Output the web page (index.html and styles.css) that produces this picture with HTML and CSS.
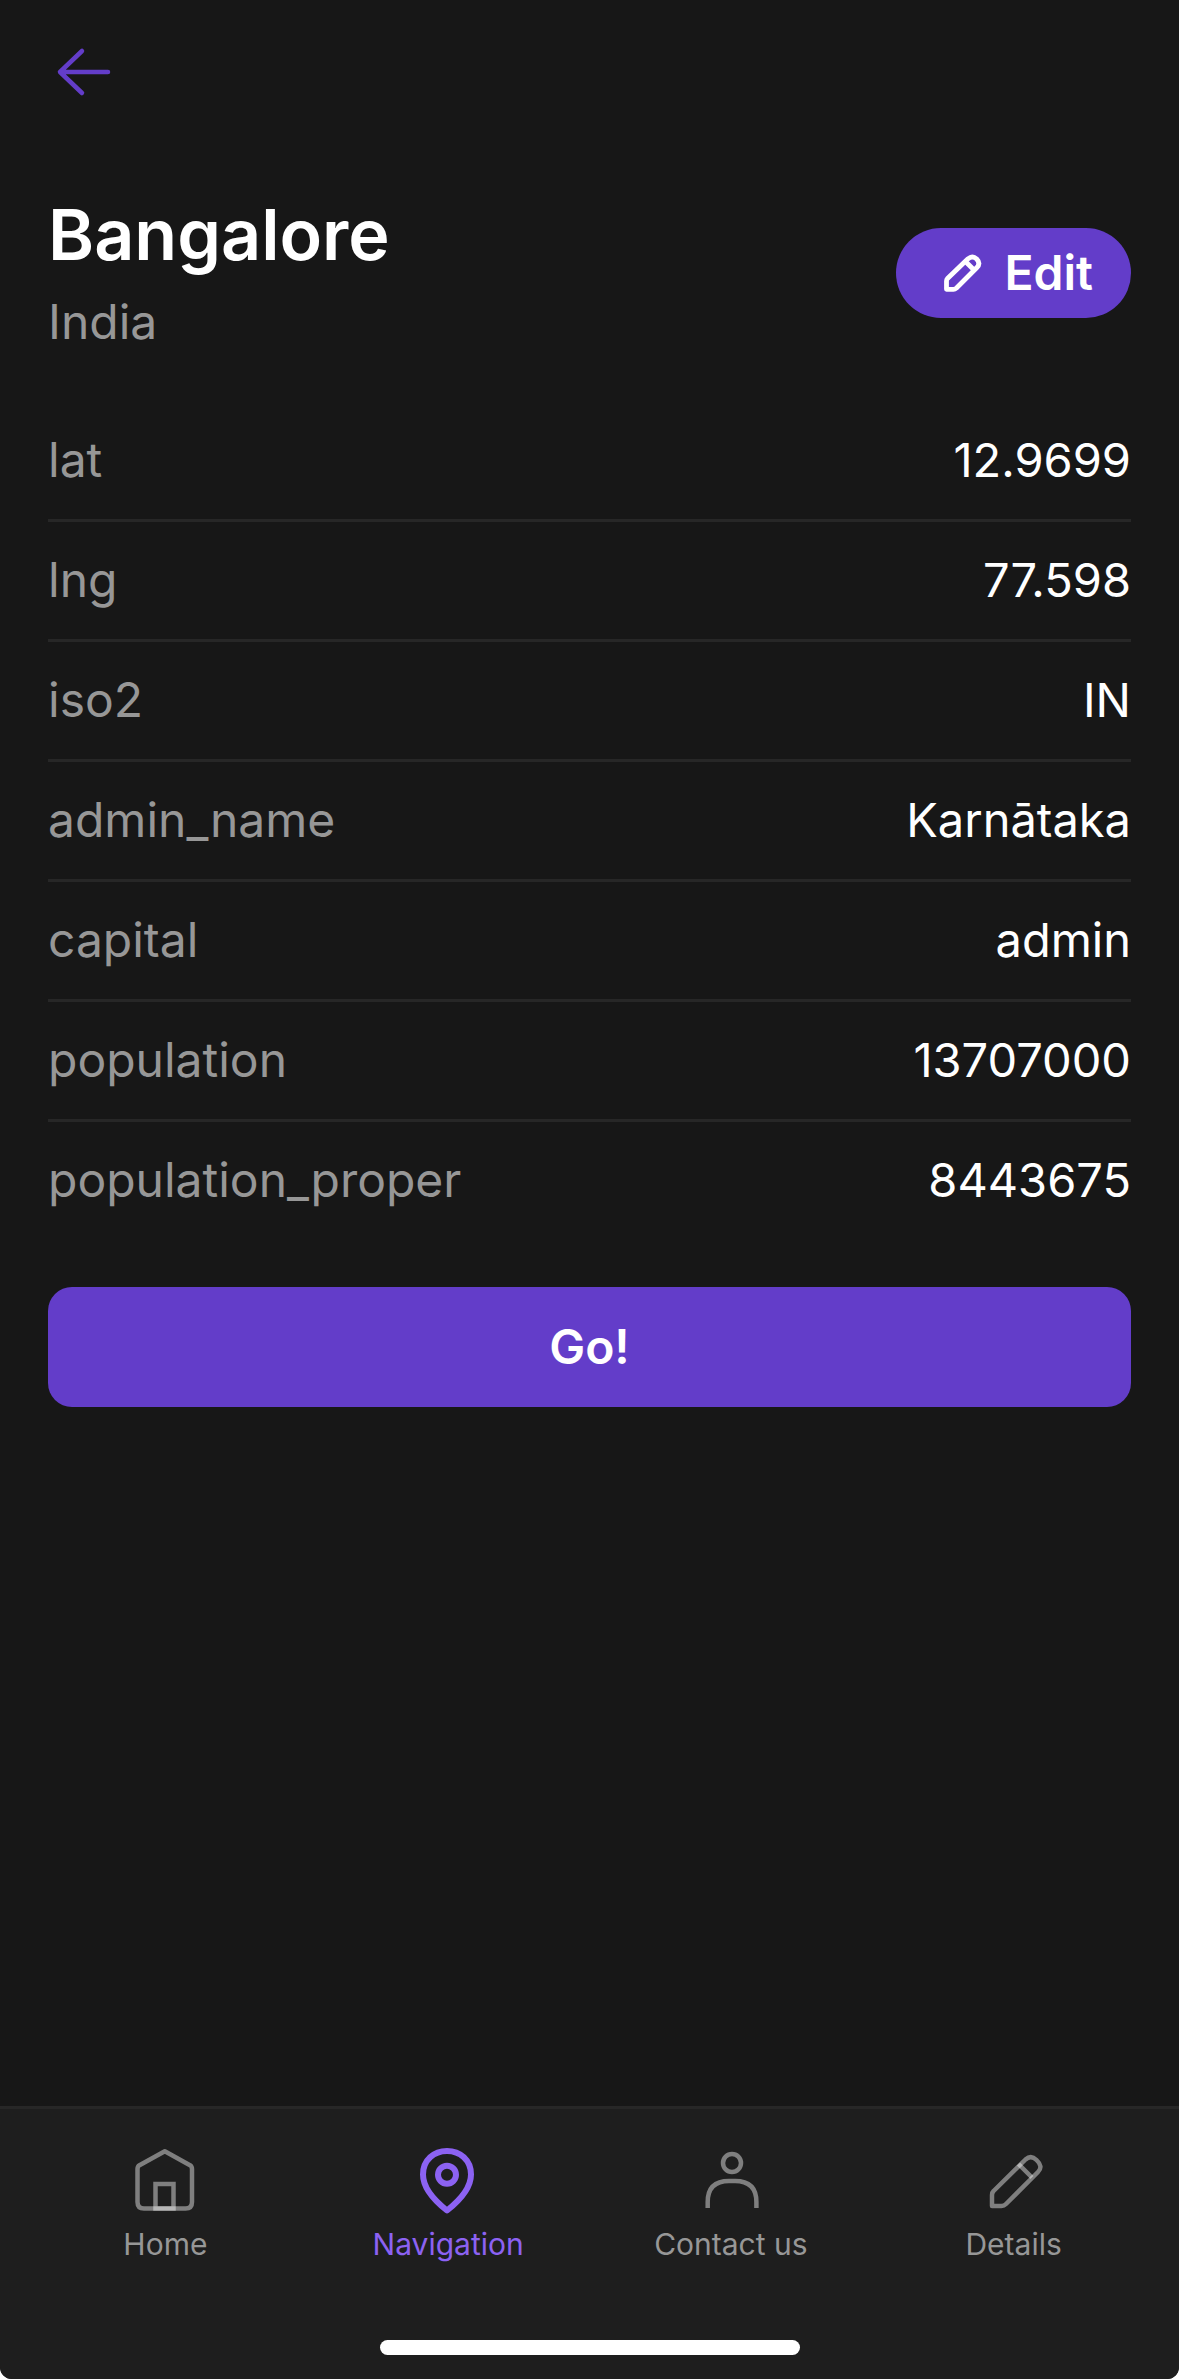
FILE: index.html
```html
<!DOCTYPE html>
<html lang="en">
<head>
<meta charset="utf-8">
<meta name="viewport" content="width=device-width, initial-scale=1">
<title>Bangalore</title>
<link rel="stylesheet" href="styles.css">
</head>
<body>
<div class="screen">
  <header class="topbar">
    <a class="back" href="#" aria-label="Back">
      <svg class="icon" viewBox="0 0 72 72" fill="none" stroke="currentColor" stroke-width="4.5" stroke-linecap="round" stroke-linejoin="round"><path d="M60 36H12M34 15L12 36L34 57"/></svg>
    </a>
  </header>
  <main class="content">
    <div class="heading">
      <div>
        <h1 class="title">Bangalore</h1>
        <p class="subtitle">India</p>
      </div>
      <button class="edit" type="button">
        <svg class="edit-icon" viewBox="0 0 48 48" fill="none" stroke="currentColor" stroke-width="4.8" stroke-linejoin="round"><path d="M8.5 40.3V32Q8.5 30.5 9.5 29.5L30 9.8Q34.5 6 38.7 10Q43 14.5 38.7 18.8L18.5 39Q17 40.3 15.5 40.3ZM27.5 12.5L36 21"/></svg>
        <span>Edit</span>
      </button>
    </div>
    <dl class="facts">
      <div class="fact"><dt>lat</dt><dd>12.9699</dd></div>
      <div class="fact"><dt>lng</dt><dd>77.598</dd></div>
      <div class="fact"><dt>iso2</dt><dd>IN</dd></div>
      <div class="fact"><dt>admin_name</dt><dd>Karnātaka</dd></div>
      <div class="fact"><dt>capital</dt><dd>admin</dd></div>
      <div class="fact"><dt>population</dt><dd>13707000</dd></div>
      <div class="fact"><dt>population_proper</dt><dd>8443675</dd></div>
    </dl>
    <button class="go" type="button">Go!</button>
  </main>
  <footer class="footer">
    <nav class="tabs">
      <a class="tab" href="#">
        <svg class="icon" viewBox="0 0 72 72" fill="none" stroke="currentColor" stroke-width="4.5" stroke-linejoin="round"><path d="M8.5 24Q8.5 21.5 10.5 20.2L35.8 6.3L61 20.2Q63 21.5 63 24V57Q63 63.5 56.5 63.5H15Q8.5 63.5 8.5 57Z"/><path d="M26.5 63.5V39H44.5V63.5Z" stroke-linejoin="miter"/></svg>
        <span>Home</span>
      </a>
      <a class="tab tab-active" href="#" aria-current="page">
        <svg class="icon" viewBox="0 0 72 72" fill="none" stroke="currentColor" stroke-width="6" stroke-linejoin="round"><path d="M35 65.5C23 56 11 42.5 11 29.5C11 15 22 6 35 6S59 15 59 29.5C59 42.5 47 56 35 65.5Z"/><circle cx="35" cy="29.7" r="9"/></svg>
        <span>Navigation</span>
      </a>
      <a class="tab" href="#">
        <svg class="icon" viewBox="0 0 72 72" fill="none" stroke="currentColor" stroke-width="4.5"><circle cx="37" cy="18" r="9"/><path d="M12.7 63V57Q12.7 36 34 36H40Q61.4 36 61.4 57V63"/></svg>
        <span>Contact us</span>
      </a>
      <a class="tab" href="#">
        <svg class="icon" viewBox="0 0 72 72" fill="none" stroke="currentColor" stroke-width="4.5" stroke-linejoin="round"><path d="M14 61V50Q14 47.5 15.6 46L47.5 14.5Q53 9.7 58.5 15Q65.5 21.5 60 27L28 59Q26 61 23.5 61Z"/><path d="M40.5 19L54 32.5"/></svg>
        <span>Details</span>
      </a>
    </nav>
    <div class="home-indicator"></div>
  </footer>
</div>
</body>
</html>
```
FILE: styles.css
```css
* {
  box-sizing: border-box;
}

body {
  margin: 0;
  background: #ffffff;
  font-family: Inter, "Liberation Sans", sans-serif;
  font-size: 48px;
  line-height: 60px;
}

h1, p, dl, dd {
  margin: 0;
}

.screen {
  display: flex;
  flex-direction: column;
  min-height: 100vh;
  overflow: hidden;
  border-radius: 0 0 12px 12px;
  background: #171717;
  color: #ffffff;
}

.icon {
  display: block;
  width: 72px;
  height: 72px;
}

.topbar {
  display: flex;
  padding: 36px 48px;
}

.back {
  color: #633dc9;
}

.content {
  flex: 1;
  padding: 48px;
}

.heading {
  display: flex;
  align-items: center;
  justify-content: space-between;
}

.title {
  font-size: 70px;
  font-weight: 600;
  line-height: 86px;
}

.subtitle {
  margin-top: 12px;
  color: #979797;
  line-height: 64px;
}

.edit {
  display: flex;
  align-items: center;
  gap: 18px;
  height: 90px;
  padding: 0 38px 0 42px;
  border: 0;
  border-radius: 45px;
  background: #633dc9;
  color: #ffffff;
  font: inherit;
  font-weight: 600;
}

.edit-icon {
  width: 48px;
  height: 48px;
}

.facts {
  margin-top: 48px;
}

.fact {
  display: flex;
  align-items: center;
  justify-content: space-between;
  height: 120px;
  padding-bottom: 2px;
  border-bottom: 3px solid #272727;
}

.fact:last-child {
  height: 117px;
  border-bottom: 0;
}

.fact dt {
  color: #979797;
}

.fact dd {
  font-size: 47px;
}

.go {
  display: block;
  width: 100%;
  height: 120px;
  margin-top: 48px;
  border: 0;
  border-radius: 24px;
  background: #633dc9;
  color: #ffffff;
  font: inherit;
  font-weight: 600;
}

.footer {
  padding: 36px 24px 24px;
  border-top: 3px solid #272727;
  background: #1e1e1e;
}

.tabs {
  display: grid;
  grid-template-columns: repeat(4, 1fr);
}

.tab {
  display: flex;
  flex-direction: column;
  align-items: center;
  gap: 9px;
  color: #979797;
  font-size: 30px;
  line-height: 36px;
  text-decoration: none;
}

.tab .icon {
  color: #ffffff;
  stroke-opacity: 0.43;
}

.tab-active,
.tab-active .icon {
  color: #8c62f2;
  stroke-opacity: 1;
}

.home-indicator {
  width: 420px;
  height: 15px;
  margin: 78px auto 0;
  border-radius: 8px;
  background: #ffffff;
}
```
